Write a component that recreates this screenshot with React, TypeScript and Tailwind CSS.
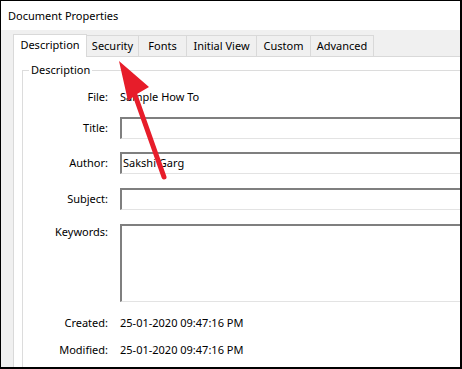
export default function App() {
  const tabs = [
    { name: "Description", w: "w-[74px]", active: true },
    { name: "Security", w: "w-[52px]" },
    { name: "Fonts", w: "w-[48px]" },
    { name: "Initial View", w: "w-[70px]" },
    { name: "Custom", w: "w-[54px]" },
    { name: "Advanced", w: "w-[63px]" },
  ];

  const box =
    "border-t-2 border-l-2 border-t-[#7f7f7f] border-l-[#7f7f7f] border-b border-b-[#e3e3e3] bg-white";

  return (
    <div
      className="relative w-[462px] h-[369px] overflow-hidden border-t border-l border-r-2 border-b-2 border-black bg-[#f0f0f0] text-[11px] text-black"
      style={{ fontFamily: '"Noto Sans", "Segoe UI", sans-serif' }}
    >
      {/* title bar */}
      <div className="h-[29px] bg-white pl-[7px] flex items-center text-[11px] leading-none">
        Document Properties
      </div>

      {/* tabs */}
      <div className="pl-[12px] pt-[4px] w-[700px]">
        <div className="flex items-end h-[23px] relative z-10">
          {tabs.map((t) =>
            t.active ? (
              <div
                key={t.name}
                className={`${t.w} h-[23px] bg-white border border-b-0 border-[#d9d9d9] flex items-center justify-center pb-[2px]`}
              >
                {t.name}
              </div>
            ) : (
              <div
                key={t.name}
                className={`${t.w} h-[21px] border-t border-r border-[#d9d9d9] flex items-center justify-center mb-[1px]`}
              >
                {t.name}
              </div>
            )
          )}
        </div>

        {/* panel */}
        <div className="-mt-[1px] bg-white border-t border-l border-[#d9d9d9] h-[320px] pl-[8px] pt-[13px]">
          <div className="relative border-t border-l border-[#dcdcdc] h-[320px]">
            <div className="absolute -top-[9px] left-[6px] bg-white px-[2px] leading-[16px]">
              Description
            </div>

            <div className="flex flex-col pt-[16px]">
              <Row label="File:" className="h-[20px]">
                <span className="leading-[20px]">Sample How To</span>
              </Row>
              <Row label="Title:" className="mt-[10px] h-[22px]">
                <div className={`${box} h-[22px]`} />
              </Row>
              <Row label="Author:" className="mt-[13px] h-[22px]">
                <div className={`${box} h-[22px] pl-[1px] leading-[18px]`}>Sakshi Garg</div>
              </Row>
              <Row label="Subject:" className="mt-[14px] h-[22px]">
                <div className={`${box} h-[22px]`} />
              </Row>
              <Row label="Keywords:" className="mt-[14px] h-[78px]" top>
                <div className={`${box} h-[78px]`} />
              </Row>
              <Row label="Created:" className="mt-[11px] h-[20px]">
                <span className="leading-[20px]">25-01-2020 09:47:16 PM</span>
              </Row>
              <Row label="Modified:" className="mt-[7px] h-[20px]">
                <span className="leading-[20px]">25-01-2020 09:47:16 PM</span>
              </Row>
            </div>
          </div>
        </div>
      </div>

      {/* red annotation arrow */}
      <svg
        className="absolute left-0 top-0 pointer-events-none"
        width="462"
        height="369"
        viewBox="0 0 462 369"
      >
        <line
          x1="163"
          y1="176"
          x2="134"
          y2="94"
          stroke="#e71d2a"
          strokeWidth="5"
          strokeLinecap="round"
        />
        <polygon points="118,60 148,86 136,93 127,100" fill="#e71d2a" />
      </svg>
    </div>
  );
}

function Row({
  label,
  children,
  className = "",
  top = false,
}: {
  label: string;
  children: React.ReactNode;
  className?: string;
  top?: boolean;
}) {
  return (
    <div className={`flex ${className}`}>
      <div
        className={`w-[85px] shrink-0 text-right ${
          top ? "leading-[16px]" : "leading-[20px] self-center"
        }`}
      >
        {label}
      </div>
      <div className="ml-[12px] flex-1">{children}</div>
    </div>
  );
}
